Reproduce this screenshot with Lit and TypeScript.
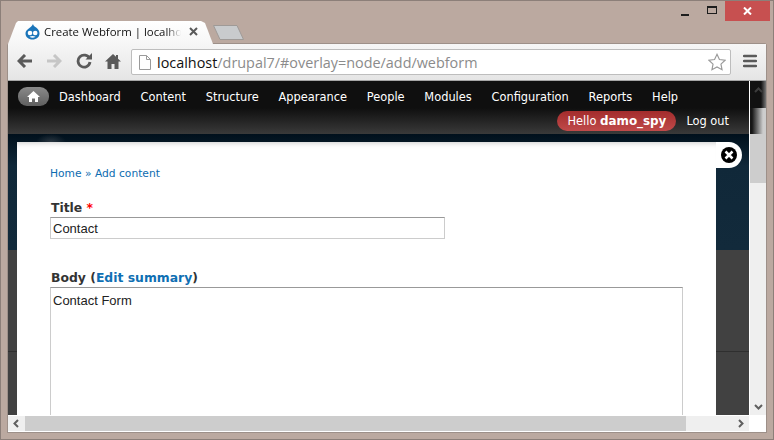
import { LitElement, html, css } from "lit";
import { customElement } from "lit/decorators.js";

const NAV = [
  "Dashboard",
  "Content",
  "Structure",
  "Appearance",
  "People",
  "Modules",
  "Configuration",
  "Reports",
  "Help",
];

@customElement("app-root")
export class AppRoot extends LitElement {
  static styles = css`
    :host {
      display: block;
      width: 774px;
      height: 440px;
      overflow: hidden;
    }
    .window {
      box-sizing: border-box;
      width: 774px;
      height: 440px;
      padding: 0 7px 7px 7px;
      background: #bba9a0;
      border: 1px solid #8c7f79;
      display: flex;
      flex-direction: column;
      font-family: "DejaVu Sans", sans-serif;
    }

    /* title bar */
    .titlebar {
      height: 43px;
      flex: none;
      display: flex;
      align-items: flex-end;
      position: relative;
    }
    .tab {
      box-sizing: border-box;
      width: 205px;
      height: 23px;
      padding: 3px 0 0 17px;
      display: flex;
      align-items: flex-start;
      gap: 4px;
      background: linear-gradient(#ffffff, #f6f6f6);
      clip-path: polygon(10px 0, 193px 0, 197px 2px, 205px 23px, 0 23px, 8px 2px);
    }
    .tab-title {
      width: 137px;
      overflow: hidden;
      white-space: nowrap;
      font: 11.4px/16px "Open Sans", sans-serif;
      color: #111;
      -webkit-mask-image: linear-gradient(90deg, #000 122px, transparent 137px);
    }
    .tab-x {
      margin: 3px 0 0 4px;
    }
    .new-tab {
      flex: none;
      display: block;
      margin-bottom: 4px;
    }
    .win-controls {
      position: absolute;
      top: 0;
      right: -4px;
      display: flex;
      align-items: flex-start;
    }
    .win-btn {
      width: 26.5px;
      height: 20px;
      display: flex;
      align-items: center;
      justify-content: center;
    }
    .win-min {
      width: 8px;
      height: 2px;
      margin-top: 7px;
      background: #1d1d1d;
    }
    .win-max {
      box-sizing: border-box;
      width: 10px;
      height: 8px;
      margin-top: -2px;
      border: 1px solid #1d1d1d;
      border-top-width: 2px;
    }
    .win-close {
      width: 45px;
      background: #c75050;
    }

    /* toolbar */
    .browser {
      flex: 1;
      min-height: 0;
      display: flex;
      flex-direction: column;
      background: #fff;
      box-shadow: 0 0 0 1px #9d9089;
      border-radius: 2px 2px 0 0;
    }
    .toolbar {
      height: 37px;
      flex: none;
      box-sizing: border-box;
      padding: 5px 6px 0 0;
      display: flex;
      align-items: flex-start;
      background: linear-gradient(#f6f6f6, #e5e5e5);
      border-bottom: 1px solid #a5a5a5;
    }
    .nav-btn {
      width: 29.5px;
      height: 24px;
      flex: none;
      display: flex;
      align-items: center;
      justify-content: center;
    }
    .tools-left {
      display: flex;
      padding-left: 2px;
      margin-right: 3px;
    }
    .omnibox {
      box-sizing: border-box;
      width: 600px;
      height: 26px;
      flex: none;
      display: flex;
      align-items: center;
      padding: 0 4px 0 7px;
      gap: 6px;
      background: #fff;
      border: 1px solid #bdbdbd;
      border-radius: 2px;
      font: 14.4px "Open Sans", sans-serif;
      white-space: nowrap;
    }
    .url {
      flex: 1;
      color: #8b8b8b;
    }
    .url b {
      font-weight: 400;
      color: #111;
    }
    .menu-btn {
      margin-left: 4px;
    }

    /* page viewport */
    .viewport {
      flex: 1;
      min-height: 0;
      display: grid;
      grid-template-columns: 1fr 17px;
      grid-template-rows: 1fr 17px;
    }
    .page {
      min-width: 0;
      min-height: 0;
      overflow: hidden;
      display: flex;
      flex-direction: column;
      background:
        radial-gradient(15px 8px at 43px 61px, #2a3640, transparent),
        linear-gradient(
          #00101c 53px,
          #102839 85px,
          #122a3b 169px,
          #414141 169px,
          #414141 270px,
          #2f2f2f 270px,
          #2f2f2f 271px,
          #414141 271px
        );
    }
    .admin {
      height: 53px;
      flex: none;
      box-sizing: border-box;
      padding: 6px 20px 0 10px;
      background: linear-gradient(#0f0f0f 0, #0f0f0f 27px, #3a3a3a 53px);
      color: #fff;
      font-size: 11.4px;
      line-height: 18px;
    }
    .admin-nav {
      display: flex;
      align-items: center;
    }
    .home {
      width: 31px;
      height: 19px;
      margin-right: 10px;
      display: flex;
      align-items: center;
      justify-content: center;
      border-radius: 9px;
      background: linear-gradient(#8a8a8a, #5f5f5f);
    }
    .admin-nav span {
      margin-right: 19.8px;
    }
    .user {
      display: flex;
      justify-content: flex-end;
      align-items: center;
      margin-top: 5px;
    }
    .hello {
      height: 20px;
      line-height: 20px;
      padding: 0 10px;
      margin-right: 10px;
      border-radius: 10px;
      background: linear-gradient(#a32c2c, #c04a4a);
    }
    .hello b {
      font-size: 11.9px;
    }
    .overlay {
      box-sizing: border-box;
      position: relative;
      flex: 1;
      margin: 8px 33px 0 9px;
      padding: 25px 33px 0;
      background: #fff;
      box-shadow: inset 0 6px 6px -6px #bbb;
    }
    .close {
      position: absolute;
      top: 0;
      right: -26px;
      width: 26px;
      height: 26px;
      display: flex;
      align-items: center;
      justify-content: center;
      background: #fff;
      border-radius: 0 13px 13px 0;
    }
    .crumb {
      font-size: 10.7px;
      line-height: 14px;
      color: #0d6cb0;
    }
    label {
      display: block;
      padding-left: 1px;
      font-size: 12.4px;
      font-weight: 700;
      line-height: 16px;
      color: #333;
    }
    label a {
      color: #0f6fb3;
    }
    .req {
      color: #f00;
    }
    .title-label {
      margin-top: 19px;
    }
    .field {
      box-sizing: border-box;
      border: 1px solid #ccc;
      border-top-color: #999;
      padding: 3px 2px 2px;
      font: 13px/16px "Liberation Sans", sans-serif;
      color: #222;
    }
    .title-field {
      width: 395px;
      height: 22px;
      margin-top: 1px;
    }
    .body-label {
      margin-top: 31px;
    }
    .body-field {
      width: 633px;
      height: 140px;
      margin-top: 1px;
      padding-top: 5px;
      border-bottom: 0;
    }

    /* scrollbars */
    .sb-v {
      grid-row: 1 / 2;
      grid-column: 2;
      display: flex;
      flex-direction: column;
      background: #efefef;
      border-left: 1px solid #fff;
      position: relative;
    }
    .sb-v .thumb {
      height: 102px;
      background:
        linear-gradient(90deg, #111 11px, #777) 0 0 / 100% 27px no-repeat,
        linear-gradient(90deg, #161616 2px, transparent 13px) 0 27px / 100% 26px no-repeat,
        #cdcdcd;
    }
    .sb-v .spacer {
      flex: 1;
    }
    .sb-arrow {
      height: 17px;
      flex: none;
      display: flex;
      align-items: center;
      justify-content: center;
    }
    .sb-arrow.top {
      position: absolute;
      top: 1px;
      left: 0;
      right: 0;
    }
    .sb-h {
      grid-row: 2;
      grid-column: 1;
      display: flex;
      align-items: stretch;
      background: #efefef;
      border-top: 1px solid #fff;
      border-bottom: 1px solid #fff;
      box-sizing: border-box;
    }
    .sb-h .arrow {
      width: 17px;
      flex: none;
      display: flex;
      align-items: center;
      justify-content: center;
    }
    .sb-h .thumb {
      width: 661px;
      background: #cdcdcd;
    }
    .sb-h .spacer {
      flex: 1;
    }
    .corner {
      background: #fff;
    }
  `;

  private _chevron(d: string, colour = "#5f5f5f") {
    return html`<svg width="9" height="9" viewBox="0 0 9 9">
      <path d=${d} fill="none" stroke=${colour} stroke-width="2" />
    </svg>`;
  }

  render() {
    return html`
      <div class="window">
        <div class="titlebar">
          <div class="tab">
            <svg width="15" height="16" viewBox="0 0 15 16">
              <path
                d="M8 0c.3 2 2 2.600 3.500 3.800C13.300 5.200 14.500 7.200 14.500 9.500 14.500 13 11.500 15.500 7.500 15.500S.5 13 .5 9.500C.5 5 6 4.500 8 0z"
                fill="#1b75ba"
              />
              <circle cx="5" cy="9" r="2.300" fill="#fff" />
              <circle cx="10.200" cy="9" r="2.300" fill="#fff" />
              <path d="M4.500 12.800c2-1.200 4-1.200 6 0-2 1.300-4 1.300-6 0z" fill="#fff" />
            </svg>
            <div class="tab-title">Create Webform | localhost</div>
            <svg class="tab-x" width="9" height="9" viewBox="0 0 9 9">
              <path d="M1 1l7 7M8 1L1 8" stroke="#5a5a5a" stroke-width="2" />
            </svg>
          </div>
          <svg class="new-tab" width="31" height="15" viewBox="0 0 31 15">
            <path d="M.5.500h23.500l6.500 14H7z" fill="#c9cbcd" stroke="#9f9a97" />
          </svg>
          <div class="win-controls">
            <div class="win-btn"><div class="win-min"></div></div>
            <div class="win-btn"><div class="win-max"></div></div>
            <div class="win-btn win-close">
              <svg width="9" height="8" viewBox="0 0 9 8">
                <path d="M1 .5l7 7M8 .5l-7 7" stroke="#fff" stroke-width="2" />
              </svg>
            </div>
          </div>
        </div>
        <div class="browser">
          <div class="toolbar">
            <div class="tools-left">
              <div class="nav-btn">
                <svg width="16" height="14" viewBox="0 0 16 14">
                  <path d="M8 1L2 7l6 6M2.500 7H15" fill="none" stroke="#5a5a5a" stroke-width="3" />
                </svg>
              </div>
              <div class="nav-btn">
                <svg width="16" height="14" viewBox="0 0 16 14">
                  <path d="M8 1l6 6-6 6M13.500 7H1" fill="none" stroke="#c6c6c6" stroke-width="3" />
                </svg>
              </div>
              <div class="nav-btn">
                <svg width="16" height="16" viewBox="0 0 16 16">
                  <path d="M13.500 5.500A6 6 0 1 0 14 9" fill="none" stroke="#5a5a5a" stroke-width="2.800" />
                  <path d="M9.500 6.500H16V0z" fill="#5a5a5a" />
                </svg>
              </div>
              <div class="nav-btn">
                <svg width="16" height="15" viewBox="0 0 16 15">
                  <path d="M8 0L0 7.500h2.500V15h4v-5h3v5h4V7.500H16L13 4.700V1h-2v1.800z" fill="#5a5a5a" />
                </svg>
              </div>
            </div>
            <div class="omnibox">
              <svg width="12" height="15" viewBox="0 0 12 15">
                <path d="M.5.500h7l4 4v10H.5z M7.500.500v4h4" fill="#fff" stroke="#9a9a9a" />
              </svg>
              <div class="url"><b>localhost</b>/drupal7/#overlay=node/add/webform</div>
              <svg width="18" height="18" viewBox="0 0 20 19">
                <path
                  d="M10 1l2.700 5.800 6.300.8-4.600 4.300 1.200 6.200L10 15l-5.600 3.100 1.200-6.200L1 7.600l6.300-.8z"
                  fill="#fff"
                  stroke="#9a9a9a"
                  stroke-width="1.300"
                />
              </svg>
            </div>
            <div class="nav-btn menu-btn">
              <svg width="14" height="14" viewBox="0 0 14 14">
                <path d="M1 2h12M1 7h12M1 12h12" stroke="#5a5a5a" stroke-width="2.500" stroke-linecap="round" />
              </svg>
            </div>
          </div>
          <div class="viewport">
            <div class="page">
              <div class="admin">
                <div class="admin-nav">
                  <div class="home">
                    <svg width="13" height="11" viewBox="0 0 13 11">
                      <path d="M6.500 0L0 6h2v5h3V7.500h3V11h3V6h2z" fill="#fff" />
                    </svg>
                  </div>
                  ${NAV.map((n) => html`<span>${n}</span>`)}
                </div>
                <div class="user">
                  <div class="hello">Hello <b>damo_spy</b></div>
                  <div>Log out</div>
                </div>
              </div>
              <div class="overlay">
                <div class="close">
                  <svg width="18" height="18" viewBox="0 0 18 18">
                    <circle cx="9" cy="9" r="8" fill="#000" />
                    <path d="M5.500 5.500l7 7M12.500 5.500l-7 7" stroke="#fff" stroke-width="2.500" />
                  </svg>
                </div>
                <div class="crumb">Home » Add content</div>
                <label class="title-label">Title <span class="req">*</span></label>
                <div class="field title-field">Contact</div>
                <label class="body-label">Body (<a>Edit summary</a>)</label>
                <div class="field body-field">Contact Form</div>
              </div>
            </div>
            <div class="sb-v">
              <div class="sb-arrow top">${this._chevron("M1 6l3.500-3.500L8 6", "#3c3c3c")}</div>
              <div class="thumb"></div>
              <div class="spacer"></div>
              <div class="sb-arrow">${this._chevron("M1 3l3.500 3.500L8 3")}</div>
            </div>
            <div class="sb-h">
              <div class="arrow">${this._chevron("M6 1L2.500 4.500 6 8")}</div>
              <div class="thumb"></div>
              <div class="spacer"></div>
              <div class="arrow">${this._chevron("M3 1l3.500 3.500L3 8")}</div>
            </div>
            <div class="corner"></div>
          </div>
        </div>
      </div>
    `;
  }
}
